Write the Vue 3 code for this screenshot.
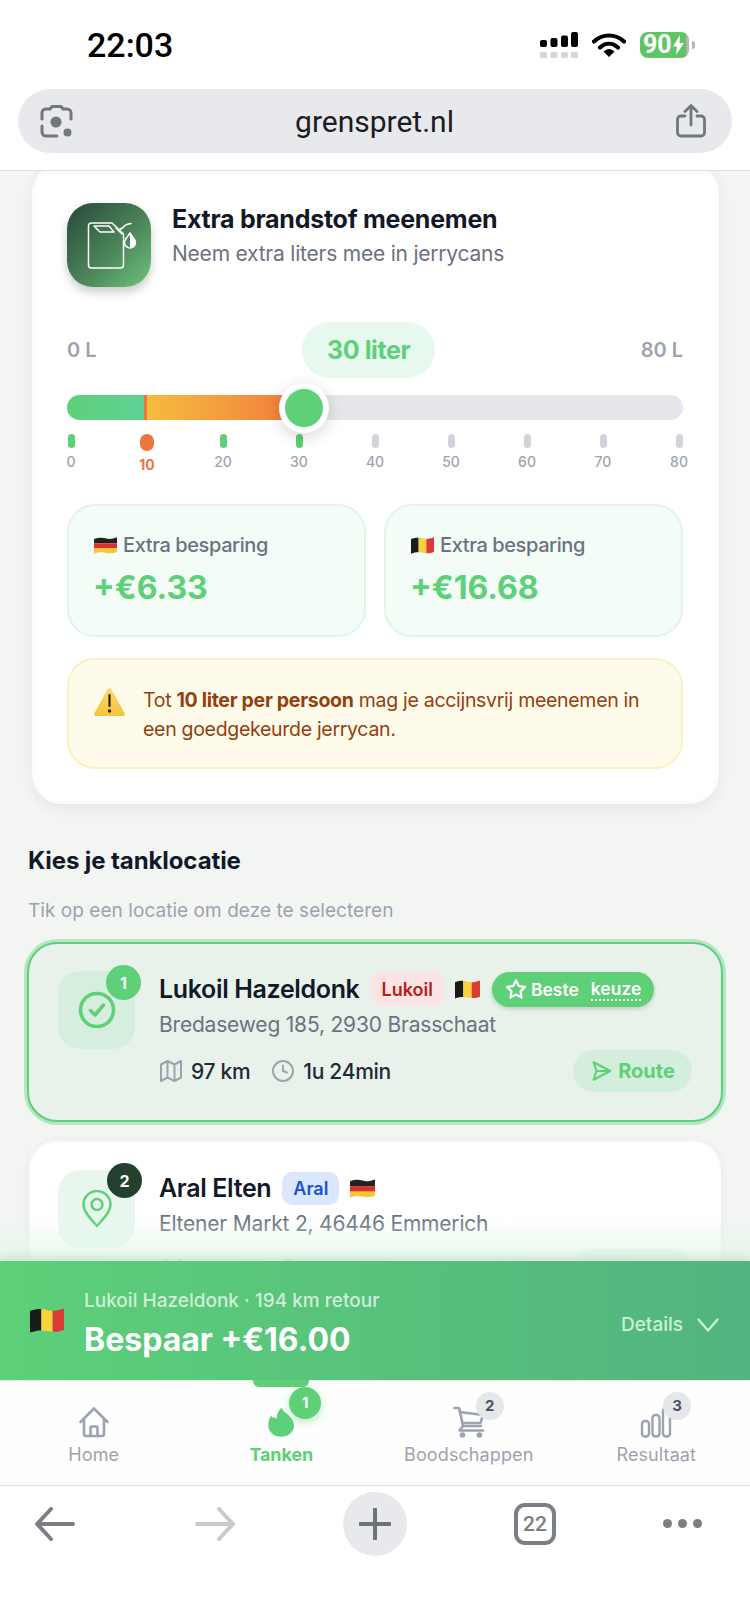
<template>
  <div class="page">
    <svg class="defs" width="0" height="0">
      <defs>
        <clipPath id="flag-clip" clipPathUnits="objectBoundingBox">
          <path d="M0 .12C.2 .02 .35 .02 .5 .08S.8 .12 1 .02V.88C.8 .98 .65 .96 .5 .92S.2 .88 0 .98Z" />
        </clipPath>
        <symbol id="flag-be" viewBox="0 0 33 24" preserveAspectRatio="none">
          <g clip-path="url(#flag-clip)">
            <rect width="11" height="24" fill="#1b1b1b" />
            <rect x="11" width="11" height="24" fill="#f8d33c" />
            <rect x="22" width="11" height="24" fill="#dc3a34" />
          </g>
        </symbol>
        <symbol id="flag-de" viewBox="0 0 33 24" preserveAspectRatio="none">
          <g clip-path="url(#flag-clip)">
            <rect width="33" height="9" fill="#222" />
            <rect y="9" width="33" height="7" fill="#d8322c" />
            <rect y="16" width="33" height="8" fill="#f6c633" />
          </g>
        </symbol>
      </defs>
    </svg>

    <header class="browser-top">
      <div class="status">
        <span class="time">22:03</span>
        <div class="status-icons">
          <svg width="38" height="26" viewBox="0 0 38 26">
            <rect x="0" y="8" width="7" height="7" rx="2" />
            <rect x="10.500" y="6" width="7" height="9" rx="2" />
            <rect x="21" y="3.500" width="7" height="11.500" rx="2" />
            <rect x="31" y="0" width="7" height="15" rx="2" />
            <g fill="#d6d6d6">
              <rect x="0" y="20" width="7" height="6" rx="1.500" />
              <rect x="10.500" y="20" width="7" height="6" rx="1.500" />
              <rect x="21" y="20" width="7" height="6" rx="1.500" />
              <rect x="31" y="20" width="7" height="6" rx="1.500" />
            </g>
          </svg>
          <svg width="34" height="24" viewBox="0 0 34 24">
            <path d="M2 8.500C10.500 .5 23.500 .5 32 8.500" fill="none" stroke="#000" stroke-width="4.200" stroke-linecap="round" />
            <path d="M8 14.500C13.500 9.500 20.500 9.500 26 14.500" fill="none" stroke="#000" stroke-width="4.200" stroke-linecap="round" />
            <path d="M11.500 18.500C15 15 19 15 22.500 18.500L17 24Z" />
          </svg>
          <div class="battery">
            <div class="battery-body">
              <span>90</span>
              <svg width="11" height="20" viewBox="0 0 11 20"><path d="M7 0 0 11.500h4L3 20l8-12H6.500Z" fill="#fff" /></svg>
            </div>
            <i></i>
          </div>
        </div>
      </div>
      <div class="address">
        <svg width="33" height="33" viewBox="0 0 33 33" fill="none" stroke="#73777c" stroke-width="3" stroke-linecap="round">
          <path d="M2 14V8a4 4 0 0 1 4-4h4l2-2.500h9L23 4h4a4 4 0 0 1 4 4v6" />
          <path d="M2 21v6a4 4 0 0 0 4 4h11" />
          <circle cx="16" cy="17" r="5.500" fill="#73777c" stroke="none" />
          <circle cx="27.500" cy="27.500" r="4" fill="#73777c" stroke="none" />
        </svg>
        <span>grenspret.nl</span>
        <svg width="30" height="34" viewBox="0 0 30 34" fill="none" stroke="#73777c" stroke-width="2.800" stroke-linecap="round" stroke-linejoin="round">
          <path d="M9 12H5a3.500 3.500 0 0 0-3.500 3.500v13A3.500 3.500 0 0 0 5 32h20a3.500 3.500 0 0 0 3.500-3.500v-13A3.500 3.500 0 0 0 25 12h-4" />
          <path d="M15 21V2M9 7.500 15 1.500l6 6" />
        </svg>
      </div>
    </header>

    <main class="scroller">
      <section class="jerry-card">
        <div class="jerry-head">
          <div class="jerry-icon">
            <svg width="84" height="84" viewBox="0 0 84 84" fill="none" stroke="#fff" stroke-width="1.500" stroke-linejoin="round" stroke-linecap="round">
              <path d="M24.500 20H45L56.500 31V62a3 3 0 0 1-3 3H24.500a3 3 0 0 1-3-3V23a3 3 0 0 1 3-3Z" />
              <path d="M27 23H42L47 29H33Z" />
              <path d="M49 25 55 31M51 27.500 56 24.500C58 21.500 60 21 64 20.500" />
              <path d="M63 30C65.500 34 68.500 36.500 68.500 39.500A5.500 5.500 0 0 1 57.500 39.500C57.500 36.500 60.500 34 63 30Z" />
              <path d="M63 45A5.500 5.500 0 0 0 68.500 39.500C68.500 36.500 65.500 34 63 30Z" fill="#fff" stroke="none" />
            </svg>
          </div>
          <div>
            <h2>Extra brandstof meenemen</h2>
            <p>Neem extra liters mee in jerrycans</p>
          </div>
        </div>

        <div class="range-row">
          <span>0 L</span>
          <b>30 liter</b>
          <span>80 L</span>
        </div>
        <div class="track">
          <div class="fill">
            <div class="fill-free"></div>
            <div class="fill-paid"></div>
          </div>
          <div class="thumb"></div>
        </div>
        <div class="ticks">
          <div v-for="t in ticks" :key="t" class="tick" :class="{ on: t <= 30, limit: t === 10 }">
            <i></i>
            <span>{{ t }}</span>
          </div>
        </div>

        <div class="savings">
          <div class="saving">
            <div class="saving-label"><svg class="flag"><use href="#flag-de" /></svg>Extra besparing</div>
            <div class="saving-value">+€6.33</div>
          </div>
          <div class="saving">
            <div class="saving-label"><svg class="flag"><use href="#flag-be" /></svg>Extra besparing</div>
            <div class="saving-value">+€16.68</div>
          </div>
        </div>

        <div class="warning">
          <svg width="31" height="28" viewBox="0 0 31 28">
            <defs>
              <linearGradient id="warn" x1="0" y1="0" x2="0" y2="1">
                <stop offset="0" stop-color="#f9dc6b" />
                <stop offset="1" stop-color="#f6c33c" />
              </linearGradient>
            </defs>
            <path d="M15.500 0C16.500 0 17 .6 17.500 1.500L30.500 25c.8 1.500 0 3-1.500 3H2c-1.500 0-2.300-1.500-1.500-3L13.500 1.500C14 .6 14.500 0 15.500 0Z" fill="url(#warn)" />
            <path d="M15.500 7v11" stroke="#222" stroke-width="2.200" stroke-linecap="round" />
            <circle cx="15.500" cy="23" r="1.700" fill="#222" />
          </svg>
          <p>Tot <b>10 liter per persoon</b> mag je accijnsvrij meenemen in een goedgekeurde jerrycan.</p>
        </div>
      </section>

      <h3 class="section-title">Kies je tanklocatie</h3>
      <p class="section-sub">Tik op een locatie om deze te selecteren</p>

      <article v-for="s in stations" :key="s.rank" class="station" :class="{ selected: s.selected }">
        <div class="station-icon">
          <svg v-if="s.selected" width="38" height="38" viewBox="0 0 38 38" fill="none" stroke="#5dd078" stroke-linecap="round" stroke-linejoin="round">
            <circle cx="19" cy="19" r="16.500" stroke-width="3.500" />
            <path d="M12.500 19.500 17 24l8.500-10" stroke-width="3.500" />
          </svg>
          <svg v-else width="30" height="38" viewBox="0 0 30 38" fill="none" stroke="#5dd078" stroke-width="2.500">
            <path d="M15 36C8 28 1.500 21.500 1.500 14.500a13.500 13.500 0 0 1 27 0C28.500 21.500 22 28 15 36Z" stroke-linejoin="round" />
            <circle cx="15" cy="14.500" r="5.500" />
          </svg>
          <span class="rank">{{ s.rank }}</span>
        </div>
        <div class="station-body">
          <div class="station-title">
            <h4>{{ s.name }}</h4>
            <span class="brand" :class="s.brandClass">{{ s.brand }}</span>
            <svg class="flag small"><use :href="'#flag-' + s.flag" /></svg>
            <span v-if="s.selected" class="best">
              <svg width="22" height="22" viewBox="0 0 24 24" fill="none" stroke="#fff" stroke-width="2.400" stroke-linejoin="round">
                <path d="m12 2.500 3 6.300 6.900.9-5 4.800 1.200 6.900-6.100-3.300-6.100 3.300 1.200-6.900-5-4.800 6.900-.9Z" />
              </svg>
              <span>Beste</span>
              <u>keuze</u>
            </span>
          </div>
          <p class="address-line">{{ s.address }}</p>
          <div class="meta-row">
            <span class="meta">
              <svg width="24" height="24" viewBox="0 0 24 24" fill="none" stroke="#9ca3af" stroke-width="2" stroke-linejoin="round">
                <path d="M2 5.500 8.500 2l7 3.500L22 2v16.500L15.500 22l-7-3.500L2 22ZM8.500 2v16.500M15.500 5.500V22" />
              </svg>
              {{ s.km }}
            </span>
            <span class="meta">
              <svg width="24" height="24" viewBox="0 0 24 24" fill="none" stroke="#9ca3af" stroke-width="2" stroke-linecap="round">
                <circle cx="12" cy="12" r="10" />
                <path d="M12 6.500V12l4 1.500" />
              </svg>
              {{ s.time }}
            </span>
            <button class="route">
              <svg width="22" height="22" viewBox="0 0 24 24" fill="none" stroke="#5dd078" stroke-width="2.400" stroke-linejoin="round">
                <path d="M4 2.500 22 12 4 21.500 7 12ZM7 12h15" />
              </svg>
              Route
            </button>
          </div>
        </div>
      </article>
      <div class="fade"></div>
    </main>

    <div class="result-bar">
      <svg class="flag big"><use href="#flag-be" /></svg>
      <div class="result-text">
        <span>Lukoil Hazeldonk · 194 km retour</span>
        <strong>Bespaar +€16.00</strong>
      </div>
      <div class="result-details">
        Details
        <svg width="22" height="14" viewBox="0 0 22 14" fill="none" stroke="#c9f3d4" stroke-width="2.200" stroke-linecap="round" stroke-linejoin="round">
          <path d="M1.500 1.500 11 12.500l9.500-11" />
        </svg>
      </div>
    </div>

    <nav class="tabs">
      <a class="tab">
        <span class="tab-icon">
          <svg width="32" height="32" viewBox="0 0 32 32" fill="none" stroke="#9ca3af" stroke-width="2.600" stroke-linecap="round" stroke-linejoin="round">
            <path d="M2.500 16 16 2.500 29.500 16M6 13v15a2 2 0 0 0 2 2h16a2 2 0 0 0 2-2V13" />
            <path d="M12.500 30v-8a1.500 1.500 0 0 1 1.500-1.500h4a1.500 1.500 0 0 1 1.500 1.500v8" />
          </svg>
        </span>
        <span>Home</span>
      </a>
      <a class="tab active">
        <i class="indicator"></i>
        <span class="tab-icon">
          <svg width="32" height="32" viewBox="0 0 32 32">
            <path d="M16.700 1.700C18 7 29 10 29 19.500A12.800 11.200 0 0 1 3.300 19.500C3.300 16 4 12.500 6 9.700C7 11 9.500 12.300 11.700 12.300C11.700 8 13.500 4 16.700 1.700Z" fill="#5dd078" />
          </svg>
          <span class="count green">1</span>
        </span>
        <span>Tanken</span>
      </a>
      <a class="tab">
        <span class="tab-icon">
          <svg width="32" height="32" viewBox="0 0 32 32" fill="none" stroke="#9ca3af" stroke-width="2.600" stroke-linecap="round" stroke-linejoin="round">
            <path d="M1.500 2H5a1.500 1.500 0 0 1 1.500 1.200L10 20h18" />
            <path d="M6.500 6 30 9l-2.500 8H9.500" />
            <path d="M10 20 6.500 24.500H30" />
            <circle cx="9.500" cy="29" r="1.500" fill="#9ca3af" />
            <circle cx="26.500" cy="29" r="1.500" fill="#9ca3af" />
          </svg>
          <span class="count">2</span>
        </span>
        <span>Boodschappen</span>
      </a>
      <a class="tab">
        <span class="tab-icon">
          <svg width="32" height="32" viewBox="0 0 32 32" fill="none" stroke="#9ca3af" stroke-width="2.400" stroke-linejoin="round">
            <rect x="2" y="15" width="7" height="15.500" rx="3" />
            <rect x="12.500" y="9" width="7" height="21.500" rx="3" />
            <rect x="23" y="2" width="7" height="28.500" rx="3" />
          </svg>
          <span class="count">3</span>
        </span>
        <span>Resultaat</span>
      </a>
    </nav>

    <footer class="browser-bottom">
      <svg class="back" width="40" height="34" viewBox="0 0 40 34" fill="none" stroke="#7b7f85" stroke-width="4" stroke-linecap="round" stroke-linejoin="round">
        <path d="M38 17H3M16 2 2 17l14 15" />
      </svg>
      <svg class="forward" width="40" height="34" viewBox="0 0 40 34" fill="none" stroke="#c9cacc" stroke-width="4" stroke-linecap="round" stroke-linejoin="round">
        <path d="M2 17h35M24 2l14 15-14 15" />
      </svg>
      <div class="plus">
        <svg width="32" height="32" viewBox="0 0 32 32" fill="none" stroke="#6f7378" stroke-width="4" stroke-linecap="round">
          <path d="M16 1v30M1 16h30" />
        </svg>
      </div>
      <div class="tab-count">22</div>
      <div class="dots"><i></i><i></i><i></i></div>
    </footer>
  </div>
</template>

<script setup>
const ticks = [0, 10, 20, 30, 40, 50, 60, 70, 80]

const stations = [
  {
    rank: 1,
    name: 'Lukoil Hazeldonk',
    brand: 'Lukoil',
    brandClass: 'red',
    flag: 'be',
    address: 'Bredaseweg 185, 2930 Brasschaat',
    km: '97 km',
    time: '1u 24min',
    selected: true
  },
  {
    rank: 2,
    name: 'Aral Elten',
    brand: 'Aral',
    brandClass: 'blue',
    flag: 'de',
    address: 'Eltener Markt 2, 46446 Emmerich',
    km: '112 km',
    time: '1u 31min',
    selected: false
  }
]
</script>

<style>
html, body {
  margin: 0;
  background: #fff;
}
</style>

<style scoped>
* {
  box-sizing: border-box;
}

h2, h3, h4, p {
  margin: 0;
}

.page {
  width: 750px;
  height: 1622px;
  display: flex;
  flex-direction: column;
  overflow: hidden;
  font-family: Inter, "Noto Sans", sans-serif;
  color: #111827;
  background: #f3f5f3;
}

.defs {
  position: absolute;
}

.flag {
  width: 23px;
  height: 17px;
  flex: none;
}

.flag.big {
  width: 34px;
  height: 25px;
}

.flag.small {
  width: 25px;
  height: 19px;
}

/* safari chrome */
.browser-top {
  height: 171px;
  flex: none;
  background: #fff;
  border-bottom: 1px solid #dfe0e0;
}

.status {
  height: 89px;
  display: flex;
  align-items: center;
  justify-content: space-between;
  padding: 0 55px 0 87px;
}

.time {
  font-family: Roboto, sans-serif;
  font-size: 34px;
  font-weight: 500;
  color: #000;
}

.status-icons {
  display: flex;
  align-items: center;
  gap: 14px;
}

.battery {
  display: flex;
  align-items: center;
  gap: 3px;
}

.battery-body {
  width: 49px;
  height: 26px;
  border-radius: 8px;
  display: flex;
  align-items: center;
  padding-left: 3px;
  background: linear-gradient(90deg, #5ec466 93%, #b4b4b4 93%);
  color: #fff;
  font-family: Roboto, sans-serif;
  font-size: 25px;
  font-weight: 700;
}

.battery-body svg {
  flex: none;
  margin-left: 1px;
}

.battery i {
  width: 3px;
  height: 8px;
  border-radius: 0 3px 3px 0;
  background: #b4b4b4;
}

.address {
  height: 64px;
  margin: 0 18px;
  padding: 0 26px 0 22px;
  border-radius: 32px;
  background: #e8e9ed;
  display: flex;
  align-items: center;
  justify-content: space-between;
  font-family: Roboto, sans-serif;
  font-size: 30px;
  color: #1c1c1e;
}

/* scrolling content */
.scroller {
  flex: 1;
  min-height: 0;
  overflow: hidden;
  position: relative;
}

.jerry-card {
  margin: -8px 31px 0 32px;
  padding: 37px 33px 32px 32px;
  background: #fff;
  border: 3px solid #fbfcfb;
  border-radius: 30px;
  box-shadow: 0 4px 14px rgba(40, 70, 50, 0.08);
}

.jerry-head {
  display: flex;
  gap: 21px;
  height: 84px;
}

.jerry-icon {
  width: 84px;
  height: 84px;
  border-radius: 26px;
  background: linear-gradient(135deg, #28473a 0%, #4f8a5c 60%, #6fc47d 100%);
  box-shadow: 0 5px 10px rgba(30, 60, 40, 0.25);
}

.jerry-head h2 {
  margin-top: -1px;
  font-size: 25px;
  line-height: 34px;
  font-weight: 700;
  letter-spacing: -0.25px;
  color: #111827;
}

.jerry-head p {
  margin-top: 1px;
  font-size: 21px;
  line-height: 34px;
  letter-spacing: -0.22px;
  color: #6b7280;
}

.range-row {
  margin-top: 35px;
  display: flex;
  align-items: center;
  justify-content: space-between;
  font-size: 20px;
  font-weight: 600;
  color: #9ca3af;
}

.range-row b {
  width: 133px;
  height: 56px;
  border-radius: 28px;
  background: #e7f8ee;
  display: flex;
  align-items: center;
  justify-content: center;
  font-size: 25px;
  font-weight: 700;
  letter-spacing: -0.4px;
  color: #5dd078;
}

.track {
  position: relative;
  margin-top: 17px;
  height: 25px;
  border-radius: 13px;
  background: #e5e7eb;
}

.fill {
  width: 237px;
  height: 25px;
  display: flex;
  border-radius: 13px 0 0 13px;
  overflow: hidden;
}

.fill-free {
  width: 80px;
  background: linear-gradient(90deg, #5dd078, #62d196);
  border-right: 3px solid #f0743e;
}

.fill-paid {
  flex: 1;
  background: linear-gradient(90deg, #f6bc3c, #f07a3e);
}

.thumb {
  position: absolute;
  left: 212px;
  top: -12px;
  width: 50px;
  height: 50px;
  border-radius: 50%;
  background: #5dd078;
  border: 6px solid #fff;
  box-shadow: 0 4px 16px rgba(0, 0, 0, 0.16);
}

.ticks {
  margin-top: 14px;
  height: 41px;
  display: flex;
  justify-content: space-between;
}

.tick {
  width: 8px;
  display: flex;
  flex-direction: column;
  align-items: center;
  gap: 5px;
  font-size: 14px;
  line-height: 18px;
  font-weight: 500;
  color: #9ca3af;
}

.tick i {
  width: 7px;
  height: 14px;
  border-radius: 4px;
  background: #d1d5db;
}

.tick.on i {
  background: #5dd078;
}

.tick.limit i {
  width: 14px;
  height: 17px;
  border-radius: 7px;
  background: #f0743e;
}

.tick.limit {
  font-weight: 700;
  color: #f0743e;
}

.savings {
  margin-top: 29px;
  display: flex;
  gap: 18px;
}

.saving {
  flex: 1;
  height: 133px;
  padding: 24px 25px 0;
  border: 2px solid #dff5e8;
  border-radius: 28px;
  background: #f3fcf7;
}

.saving-label {
  display: flex;
  align-items: center;
  gap: 6px;
  font-size: 20px;
  line-height: 30px;
  font-weight: 500;
  letter-spacing: -0.4px;
  color: #6b7280;
}

.saving-value {
  margin-top: 7px;
  margin-left: -1px;
  font-size: 32px;
  line-height: 42px;
  font-weight: 700;
  color: #5dd078;
}

.warning {
  margin-top: 21px;
  height: 111px;
  padding: 0 20px 0 25px;
  border: 2px solid #fdf0c0;
  border-radius: 28px;
  background: #fffbeb;
  display: flex;
  align-items: flex-start;
  gap: 18px;
}

.warning svg {
  flex: none;
  margin-top: 28px;
}

.warning p {
  margin-top: 26px;
  font-size: 19.500px;
  line-height: 29px;
  letter-spacing: -0.3px;
  color: #92400e;
}

.warning b {
  font-weight: 700;
}

.section-title {
  margin: 42px 28px 0;
  font-size: 24px;
  line-height: 30px;
  font-weight: 700;
  letter-spacing: -0.1px;
}

.section-sub {
  margin: 23px 28px 0;
  font-size: 19px;
  line-height: 24px;
  letter-spacing: 0.05px;
  color: #9ca3af;
}

.station {
  margin: 19px 29px 0;
  padding: 27px;
  display: flex;
  gap: 24px;
  background: #fff;
  border: 2px solid #fbfcfb;
  border-radius: 28px;
  box-shadow: 0 2px 10px rgba(40, 70, 50, 0.07);
}

.station.selected {
  margin: 19px 27px 0;
  padding: 27px 29px 28px;
  background: #e8f2ea;
  border-color: #5dd078;
  border-radius: 30px;
  box-shadow: 0 0 0 3px rgba(93, 208, 120, 0.4);
}

.station-icon {
  position: relative;
  flex: none;
  width: 77px;
  height: 78px;
  border-radius: 22px;
  background: #e8f7ee;
  display: flex;
  align-items: center;
  justify-content: center;
}

.selected .station-icon {
  background: #d6eedd;
}

.rank {
  position: absolute;
  top: -7px;
  right: -7px;
  width: 35px;
  height: 35px;
  border-radius: 50%;
  background: #24402f;
  color: #fff;
  display: flex;
  align-items: center;
  justify-content: center;
  font-size: 16px;
  font-weight: 700;
}

.selected .rank {
  top: -6px;
  right: -6px;
  background: #5dd078;
}

.station-body {
  flex: 1;
  min-width: 0;
  margin-top: 1px;
}

.station-title {
  display: flex;
  align-items: center;
  height: 34px;
}

.station-title h4 {
  font-size: 25px;
  font-weight: 600;
  letter-spacing: -0.35px;
  color: #111827;
  white-space: nowrap;
}

.brand {
  height: 33px;
  margin-left: 11px;
  padding: 0 11px;
  border-radius: 10px;
  display: flex;
  align-items: center;
  font-size: 18px;
  font-weight: 600;
}

.brand.red {
  background: #fce4e4;
  color: #b91c1c;
}

.brand.blue {
  background: #dbe7fc;
  color: #1d4ed8;
}

.flag.small {
  margin-left: 11px;
}

.best {
  height: 35px;
  margin-left: 12px;
  padding: 0 13px;
  border-radius: 18px;
  display: flex;
  align-items: center;
  gap: 4px;
  background: #5dd078;
  box-shadow: 0 2px 4px rgba(30, 60, 40, 0.2);
  color: #fff;
  font-size: 17.500px;
  font-weight: 600;
  white-space: pre;
}

.best u {
  margin-left: 8px;
  text-decoration: none;
  border-bottom: 2px dotted #fff;
  line-height: 21px;
}

.address-line {
  margin-top: 5px;
  font-size: 21px;
  line-height: 28px;
  letter-spacing: -0.2px;
  color: #6b7280;
}

.meta-row {
  margin-top: 11px;
  display: flex;
  align-items: center;
  gap: 21px;
  height: 42px;
}

.meta {
  display: flex;
  align-items: center;
  gap: 8px;
  font-size: 21px;
  font-weight: 500;
  letter-spacing: -0.3px;
  color: #1f2937;
}

.route {
  margin-left: auto;
  width: 119px;
  height: 42px;
  border: 0;
  border-radius: 21px;
  background: #d3eedc;
  display: flex;
  align-items: center;
  justify-content: center;
  gap: 6px;
  font-family: inherit;
  font-size: 20px;
  font-weight: 700;
  color: #5dd078;
}

.station:not(.selected) .route {
  background: #e0f6e8;
}

.fade {
  position: absolute;
  left: 0;
  right: 0;
  bottom: 0;
  height: 42px;
  background: linear-gradient(180deg, rgba(226, 247, 233, 0), rgba(226, 247, 233, 0.9));
}

/* savings bar */
.result-bar {
  position: relative;
  height: 119px;
  flex: none;
  padding: 0 31px 0 30px;
  display: flex;
  align-items: center;
  gap: 20px;
  background: linear-gradient(90deg, #5dd078, #52b47f);
  box-shadow: 0 -3px 10px rgba(30, 60, 40, 0.12);
}

.result-text {
  display: flex;
  flex-direction: column;
  gap: 7px;
  margin-top: 6px;
}

.result-text span {
  font-size: 19px;
  line-height: 25px;
  font-weight: 500;
  color: rgba(255, 255, 255, 0.72);
}

.result-text strong {
  font-size: 32px;
  line-height: 40px;
  font-weight: 700;
  color: #fff;
}

.result-details {
  margin-left: auto;
  margin-top: 8px;
  display: flex;
  align-items: center;
  gap: 14px;
  font-size: 19px;
  font-weight: 500;
  color: #c9f3d4;
}

/* bottom nav */
.tabs {
  height: 106px;
  flex: none;
  display: flex;
  background: #fdfefd;
  border-top: 1px solid #e9eeea;
  border-bottom: 1px solid #dfe0e0;
}

.tab {
  position: relative;
  flex: 1;
  padding-top: 25px;
  display: flex;
  flex-direction: column;
  align-items: center;
  gap: 6px;
  font-size: 18px;
  line-height: 22px;
  letter-spacing: 0.1px;
  color: #9ca3af;
}

.tab.active {
  font-weight: 700;
  letter-spacing: -0.1px;
  color: #5dd078;
}

.indicator {
  position: absolute;
  top: -1px;
  width: 56px;
  height: 7px;
  border-radius: 0 0 6px 6px;
  background: #5dd078;
}

.tab-icon {
  position: relative;
  width: 32px;
  height: 32px;
}

.tab-icon svg {
  display: block;
}

.count {
  position: absolute;
  top: -14px;
  right: -19px;
  width: 28px;
  height: 28px;
  border-radius: 50%;
  background: #e5e7eb;
  display: flex;
  align-items: center;
  justify-content: center;
  font-size: 15px;
  font-weight: 700;
  color: #4b5563;
}

.count.green {
  top: -19px;
  right: -24px;
  width: 32px;
  height: 32px;
  background: #5dd078;
  box-shadow: 0 3px 8px rgba(93, 208, 120, 0.45);
  color: #fff;
}

/* safari toolbar */
.browser-bottom {
  height: 136px;
  flex: none;
  padding: 6px 0 0 35px;
  background: #fff;
  display: flex;
  align-items: flex-start;
}

.browser-bottom > svg {
  margin-top: 15px;
}

.forward {
  margin-left: 120px;
}

.plus {
  width: 64px;
  height: 64px;
  margin-left: 108px;
  border-radius: 50%;
  background: #e8e9ed;
  display: flex;
  align-items: center;
  justify-content: center;
}

.tab-count {
  width: 42px;
  height: 42px;
  margin: 11px 0 0 107px;
  border: 4px solid #7b7f85;
  border-radius: 11px;
  display: flex;
  align-items: center;
  justify-content: center;
  font-family: Roboto, sans-serif;
  font-size: 21px;
  font-weight: 500;
  color: #7b7f85;
}

.dots {
  margin: 27px 0 0 107px;
  display: flex;
  gap: 6px;
}

.dots i {
  width: 9px;
  height: 9px;
  border-radius: 50%;
  background: #7b7f85;
}
</style>
